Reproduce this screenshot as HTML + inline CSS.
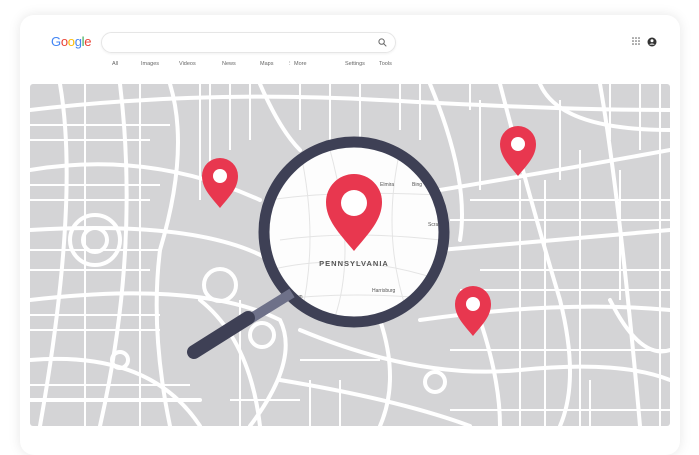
<!DOCTYPE html>
<html><head><style>
body{margin:0;width:699px;height:436px;background:#fff;overflow:hidden;font-family:"Liberation Sans",sans-serif;position:relative}
.card{position:absolute;left:20px;top:15px;width:660px;height:440px;background:#fff;border-radius:14px;box-shadow:0 0 12px rgba(0,0,0,.1)}
.logo{position:absolute;left:51px;top:34px;font-size:13px;letter-spacing:-.3px}
.search{position:absolute;left:101px;top:32px;width:293px;height:19px;border:1px solid #e6e6e6;border-radius:11px;box-shadow:0 1px 2px rgba(0,0,0,.06)}
.tabs span{position:absolute;top:61px;font-size:5.5px;color:#666}
</style></head><body>
<div class="card"></div>
<div class="logo"><span style="color:#4285f4">G</span><span style="color:#ea4335">o</span><span style="color:#fbbc05">o</span><span style="color:#4285f4">g</span><span style="color:#34a853">l</span><span style="color:#ea4335">e</span></div>
<div class="search"><svg style="position:absolute;right:8px;top:5px" width="9" height="9" viewBox="0 0 9 9"><circle cx="3.6" cy="3.6" r="2.7" fill="none" stroke="#666" stroke-width="1"/><path d="M5.6 5.6L8.3 8.3" stroke="#666" stroke-width="1"/></svg></div>
<div class="tabs"><span style="left:112px">All</span><span style="left:141px">Images</span><span style="left:179px">Videos</span><span style="left:222px">News</span><span style="left:260px">Maps</span><span style="left:287px">⋮ More</span><span style="left:345px">Settings</span><span style="left:379px">Tools</span></div>
<svg style="position:absolute;left:631px;top:37px" width="30" height="10"><g fill="#555"><circle cx="2" cy="1" r=".8"/><circle cx="5" cy="1" r=".8"/><circle cx="8" cy="1" r=".8"/><circle cx="2" cy="4" r=".8"/><circle cx="5" cy="4" r=".8"/><circle cx="8" cy="4" r=".8"/><circle cx="2" cy="7" r=".8"/><circle cx="5" cy="7" r=".8"/><circle cx="8" cy="7" r=".8"/></g><circle cx="21" cy="5" r="4.5" fill="#333"/><circle cx="21" cy="3.8" r="1.5" fill="#fff"/><path d="M18.3 7.6a3 2 0 0 1 5.4 0" fill="#fff"/></svg>
<svg style="position:absolute;left:0;top:0" width="699" height="436" viewBox="0 0 699 436">
<defs><clipPath id="m"><rect x="30" y="84" width="640" height="342" rx="3"/></clipPath><clipPath id="l"><circle cx="354" cy="232" r="86"/></clipPath></defs>
<g clip-path="url(#m)">
<rect x="30" y="84" width="640" height="342" fill="#d4d4d6"/>
<g fill="none" stroke="#fff" stroke-width="4" stroke-linecap="round">
<path d="M30 110Q200 90 380 100T670 110"/>
<path d="M60 84Q80 200 40 426"/><path d="M120 84Q140 250 100 426"/>
<path d="M30 170Q150 150 260 200"/><path d="M30 230Q200 220 270 260"/>
<path d="M30 300Q200 280 280 320Q300 360 250 426"/><path d="M30 360Q150 350 200 426"/>
<path d="M170 84Q190 150 160 250Q150 330 170 426"/>
<path d="M260 84Q280 130 300 150"/><path d="M430 84Q470 180 460 240"/>
<path d="M500 84Q530 200 560 300Q580 380 560 426"/>
<path d="M600 84Q620 200 640 426"/><path d="M440 190Q560 170 670 150"/>
<path d="M440 250Q560 240 670 230"/><path d="M420 320Q560 300 670 310"/>
<path d="M300 330Q420 380 520 370T670 380"/><path d="M380 320Q400 380 380 426"/>
<path d="M280 380Q400 400 470 426"/><path d="M200 300Q250 340 260 426"/>
<path d="M540 84Q560 130 670 130"/><path d="M30 400H200"/>
<path d="M480 320Q500 380 500 426"/><path d="M610 300Q640 360 670 350"/>
<circle cx="95" cy="240" r="25"/><circle cx="95" cy="240" r="12"/>
<circle cx="220" cy="285" r="16"/><circle cx="435" cy="382" r="10"/>
<circle cx="262" cy="335" r="12"/><circle cx="120" cy="360" r="8"/>
</g>
<g fill="none" stroke="#fff" stroke-width="2">
<path d="M30 140H150M30 200H150M30 270H150M30 330H160M200 84V200M230 84V150M300 84V130M360 84V140M400 84V130M470 84V110M560 100V180M640 84V150M470 200H670M480 270H670M450 350H670M300 360H380M230 400H300M520 380V426M590 380V426M620 170V300"/>
<path d="M30 125H170M30 185H160M30 250H160M30 315H160M30 385H190M140 84V426M85 84V426M210 84V170M240 300V426M310 380V426M340 380V426M420 84V140M480 100V190M520 180V426M545 180V426M580 150V426M660 84V426M450 220H670M460 290H670M450 410H670M250 84V140M330 84V140M610 84V140"/>
</g>
</g>
<g clip-path="url(#l)">
<rect x="260" y="140" width="190" height="190" fill="#fdfdfd"/>
<g fill="none" stroke="#e4e4e4" stroke-width="1">
<path d="M270 200Q330 190 440 195M270 270Q350 250 440 280M300 150Q320 240 300 320M400 150Q380 240 410 320M280 240Q350 230 440 240M330 150Q360 260 330 330M270 300Q360 290 440 300"/>
</g>
<text x="354" y="266" font-size="7.5" font-weight="bold" letter-spacing="1" text-anchor="middle" fill="#555">PENNSYLVANIA</text>
<text x="380" y="186" font-size="5" fill="#555">Elmira</text><text x="412" y="186" font-size="5" fill="#555">Bing</text>
<text x="372" y="292" font-size="5" fill="#555">Harrisburg</text><text x="292" y="298" font-size="5" fill="#555">town</text><text x="428" y="226" font-size="5" fill="#555">Scra</text>
</g>
<circle cx="354" cy="232" r="90" fill="none" stroke="#3e4055" stroke-width="11"/>
<path d="M292 293L245 322" stroke="#6e7189" stroke-width="10"/>
<path d="M248 318L194 352" stroke="#3e4055" stroke-width="14" stroke-linecap="round"/>
<g fill="#e8374f">
<path d="M220 208C210 196 202 188 202 176a18 18 0 0 1 36 0c0 12-8 20-18 32z"/>
<path d="M518 176C508 164 500 156 500 144a18 18 0 0 1 36 0c0 12-8 20-18 32z"/>
<path d="M473 336C463 324 455 316 455 304a18 18 0 0 1 36 0c0 12-8 20-18 32z"/>
<path d="M354 251C339 233 326 220 326 202a28 28 0 0 1 56 0c0 18-13 31-28 49z"/>
</g>
<g fill="#fff"><circle cx="220" cy="176" r="7"/><circle cx="518" cy="144" r="7"/><circle cx="473" cy="304" r="7"/><circle cx="354" cy="203" r="13"/></g>
</svg>
</body></html>
